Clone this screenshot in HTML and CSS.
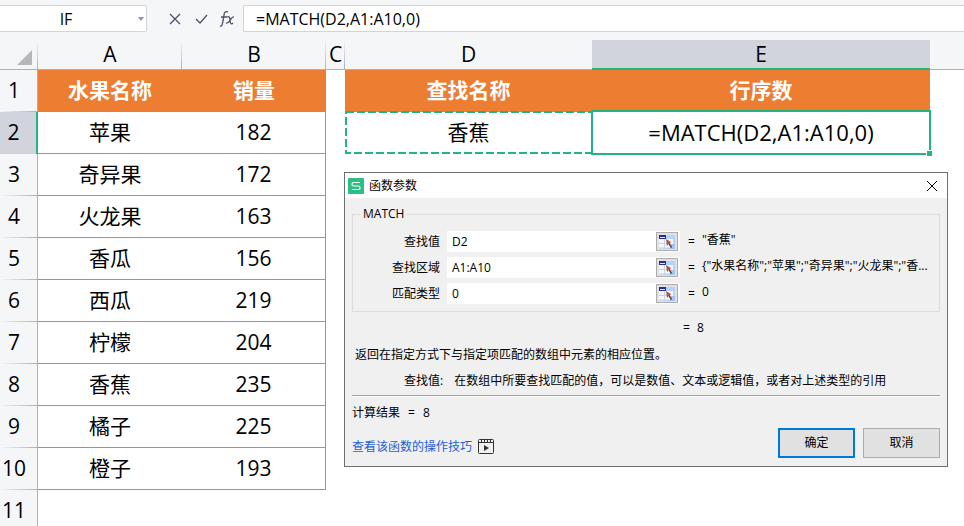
FILE: index.html
```html
<!DOCTYPE html>
<html lang="zh-CN">
<head>
<meta charset="utf-8">
<title>函数参数</title>
<link rel="stylesheet" href="styles.css">
</head>
<body>
<svg class="defs" aria-hidden="true">
  <symbol id="pick" viewBox="0 0 16 14">
    <rect x="4" y="0" width="12" height="14" fill="#b4d4fb"/>
    <path d="M0 4h14v9H0z" fill="#f3f8ff"/>
    <path d="M12 9h4v5h-6z" fill="#a3c4f6"/>
    <path d="M0 8.500h11M5.500 4v9M0 13h10" stroke="#c2d3ec" fill="none"/>
    <rect x="0" y="0" width="7" height="4" fill="#2b2f86"/>
    <rect x="1" y="2" width="5" height="1" fill="#dfe4f2"/>
    <path d="M7 4l5 3-1 1 2 4-1 1-2-4-2 2z" fill="#b5533c"/>
    <path d="M10 8l3 4-1 1-2-3z" fill="#5a4a52"/>
  </symbol>
</svg>
<header class="bar">
  <div class="namebox">
    <input class="name" aria-label="名称框" value="IF">
    <button class="drop" aria-label="名称列表"><svg viewBox="0 0 6 4"><path d="M0 0h6L3 4z"/></svg></button>
  </div>
  <div class="tools">
    <button aria-label="取消输入"><svg width="16" height="16" viewBox="0 0 16 16"><path d="M3 3l10 10M13 3L3 13"/></svg></button>
    <button aria-label="输入"><svg width="16" height="16" viewBox="0 0 16 16"><path d="M3 8l4 4 7-8"/></svg></button>
    <button aria-label="插入函数"><svg width="16" height="16" viewBox="0 0 16 16"><path d="M1 15c2 1 2-1 3-5l1-6c0-3 2-4 4-3M2 6h6M8 6c2-1 3 0 3 3s1 5 3 3M15 6c-3-1-4 7-8 6"/></svg></button>
  </div>
  <input class="formula" aria-label="编辑栏" value="=MATCH(D2,A1:A10,0)">
</header>
<main>
<table class="sheet">
  <colgroup><col class="c-row"><col class="c-a"><col class="c-a"><col class="c-c"><col class="c-d"><col class="c-e"><col></colgroup>
  <thead>
    <tr><th class="corner"><svg width="15" height="15" viewBox="0 0 15 15"><path d="M15 0v15H0z" fill="#b7b7b7"/></svg></th><th>A</th><th>B</th><th>C</th><th class="plain">D</th><th class="on">E</th><th class="plain"></th></tr>
  </thead>
  <tbody>
    <tr><th>1</th><td class="head">水果名称</td><td class="head">销量</td><td></td><td class="head">查找名称</td><td class="head">行序数</td><td></td></tr>
    <tr><th class="on">2</th><td class="line">苹果</td><td class="line end">182</td><td></td><td class="source">香蕉<svg class="ants"><rect x="1" y="1"/></svg></td><td class="active">=MATCH(D2,A1:A10,0)<i class="handle"></i></td><td></td></tr>
    <tr><th>3</th><td class="line">奇异果</td><td class="line end">172</td><td></td><td></td><td></td><td></td></tr>
    <tr><th>4</th><td class="line">火龙果</td><td class="line end">163</td><td></td><td></td><td></td><td></td></tr>
    <tr><th>5</th><td class="line">香瓜</td><td class="line end">156</td><td></td><td></td><td></td><td></td></tr>
    <tr><th>6</th><td class="line">西瓜</td><td class="line end">219</td><td></td><td></td><td></td><td></td></tr>
    <tr><th>7</th><td class="line">柠檬</td><td class="line end">204</td><td></td><td></td><td></td><td></td></tr>
    <tr><th>8</th><td class="line">香蕉</td><td class="line end">235</td><td></td><td></td><td></td><td></td></tr>
    <tr><th>9</th><td class="line">橘子</td><td class="line end">225</td><td></td><td></td><td></td><td></td></tr>
    <tr><th>10</th><td class="line">橙子</td><td class="line end">193</td><td></td><td></td><td></td><td></td></tr>
    <tr><th>11</th><td></td><td></td><td></td><td></td><td></td><td></td></tr>
  </tbody>
</table>
</main>
<section class="dialog" role="dialog" aria-label="函数参数">
  <div class="title">
    <svg width="16" height="16" viewBox="0 0 16 16"><rect width="16" height="16" rx="1" fill="#2abf83"/><path d="M12 4.500H5.500Q4 4.500 4 6.200t1.500 1.800h5Q12 8 12 9.800t-1.500 1.700H4" fill="none" stroke="#fff" stroke-width="1.200"/></svg>
    <span>函数参数</span>
    <button class="close" aria-label="关闭"><svg width="12" height="12" viewBox="0 0 12 12"><path d="M1 1l10 10M11 1L1 11" stroke="#000"/></svg></button>
  </div>
  <div class="content">
    <fieldset>
      <legend>MATCH</legend>
      <div class="arg"><label for="a1">查找值</label><div class="field"><input id="a1" value="D2"><button aria-label="选择区域"><svg width="16" height="14"><use href="#pick"/></svg></button></div><span class="eq">=</span><output>"香蕉"</output></div>
      <div class="arg"><label for="a2">查找区域</label><div class="field"><input id="a2" value="A1:A10"><button aria-label="选择区域"><svg width="16" height="14"><use href="#pick"/></svg></button></div><span class="eq">=</span><output>{"水果名称";"苹果";"奇异果";"火龙果";"香...</output></div>
      <div class="arg"><label for="a3">匹配类型</label><div class="field"><input id="a3" value="0"><button aria-label="选择区域"><svg width="16" height="14"><use href="#pick"/></svg></button></div><span class="eq">=</span><output>0</output></div>
    </fieldset>
    <div class="result"><span>=</span><output>8</output></div>
    <p class="about">返回在指定方式下与指定项匹配的数组中元素的相应位置。</p>
    <p class="help"><span>查找值:</span><span>在数组中所要查找匹配的值，可以是数值、文本或逻辑值，或者对上述类型的引用</span></p>
    <div class="total"><span>计算结果</span><span>=</span><output>8</output></div>
    <div class="foot">
      <a href="#tips">查看该函数的操作技巧<svg width="16" height="15" viewBox="0 0 16 15"><rect x=".5" y=".5" width="15" height="14" rx="1" fill="none" stroke="#333"/><path d="M1 3.500h14M3.500 1v2M6.500 1v2M9.500 1v2M12.500 1v2" fill="none" stroke="#333"/><path d="M6 6l5 3-5 3z" fill="#333"/></svg></a>
      <button class="ok">确定</button><button>取消</button>
    </div>
  </div>
</section>
</body>
</html>
```
FILE: styles.css
```css
* { box-sizing: border-box; }
body {
  margin: 0;
  height: 100vh;
  overflow: hidden;
  position: relative;
  background: #fff;
  color: #000;
  font-family: "Open Sans", "Noto Sans CJK SC", sans-serif;
  font-size: 12px;
}
input, button { font: inherit; color: inherit; margin: 0; padding: 0; border: 0; background: none; outline: 0; }
svg { display: block; }
.defs { position: absolute; width: 0; height: 0; }

.bar { height: 40px; padding: 5px 0 8px; display: flex; background: #f5f6f8; }
.namebox { width: 147px; display: flex; align-items: center; background: #fff; border: 1px solid #d3d4d8; border-left: 0; border-radius: 0 2px 2px 0; }
.name { width: 132px; text-align: center; font-size: 16px; }
.drop { width: 14px; height: 24px; padding-left: 6px; }
.drop svg { width: 6px; height: 4px; fill: #8b93b5; }
.tools { width: 96px; display: flex; align-items: center; padding-left: 20px; gap: 10px; }
.tools svg { fill: none; stroke: #4a5268; stroke-width: 1.3; }
.formula { flex: 1; min-width: 0; background: #fff; border: 1px solid #d3d4d8; border-right: 0; border-radius: 2px 0 0 2px; padding-left: 12px; font-size: 16px; }

.sheet { width: 100%; table-layout: fixed; border-collapse: separate; border-spacing: 0; font-size: 21px; line-height: 24px; }
.c-row { width: 38px; }
.c-a { width: 144px; }
.c-c { width: 19px; }
.c-d { width: 247px; }
.c-e { width: 338px; }
.sheet th, .sheet td { padding: 0 0 2px; height: 42px; text-align: center; position: relative; white-space: nowrap; }
.sheet th { font-weight: 400; background: #f5f6f8; }
.sheet thead th { height: 30px; border-bottom: 1px solid #a9afc4; background: linear-gradient(#f5f6f8, #a9afc4) right / 1px 100% no-repeat #f5f6f8; }
.sheet thead th.plain { background: #f5f6f8; }
.sheet thead th.on { padding-bottom: 0; background: #d1d4dd; border-bottom: 2px solid #22b57f; }
.sheet .corner svg { margin: 8px 6px 0 auto; }
.sheet tbody th { padding-right: 9px; border-right: 1px solid #a9afc4; background: linear-gradient(90deg, #f5f6f8, #a9afc4) bottom / 100% 1px no-repeat #f5f6f8; }
.sheet tbody th.on { background: #d1d4dd; border-right: 2px solid #22b57f; }
.sheet td.head { background: #ed7d31; color: #fff; font-weight: 700; }
.sheet td.line { border-bottom: 1px solid #ed7d31; }
.sheet td.end { border-right: 1px solid #ed7d31; }
.ants { position: absolute; left: 0; top: -1px; width: 100%; height: calc(100% + 1px); }
.ants rect { width: calc(100% - 1px); height: calc(100% - 2px); fill: none; stroke: #22b57f; stroke-width: 2; stroke-dasharray: 8 3; }
.sheet .active { font-size: 22px; }
.active::after { content: ""; position: absolute; inset: -2px -1px -1px -1px; border: 2px solid #22b57f; }
.handle { position: absolute; z-index: 1; right: -2px; bottom: -2px; width: 6px; height: 6px; background: #22b57f; border: solid #fff; border-width: 1px 0 0 1px; }

.dialog { position: absolute; left: 344px; top: 172px; width: 604px; border: 1px solid #6e6e6e; background: #f0f0f0; line-height: 18px; }
.title { height: 25px; padding: 0 9px 0 3px; display: flex; align-items: center; gap: 5px; background: #fff; }
.close { margin-left: auto; }
.content { padding: 7px 7px 8px; }
fieldset { margin: 0; padding: 8px 8px 7px; border: 1px solid #dcdcdc; min-width: 0; }
legend { padding: 0 2px; line-height: 18px; }
.arg { display: flex; align-items: center; height: 21px; margin-bottom: 5px; }
.arg:last-child { margin-bottom: 0; }
.arg label { width: 79px; text-align: right; }
.field { width: 233px; height: 21px; margin-left: 7px; display: flex; align-items: center; background: #fff; }
.field input { flex: 1; min-width: 0; padding-left: 5px; }
.field button { width: 22px; height: 19px; margin-right: 2px; display: grid; place-items: center; background: #e1e1e1; border: 1px solid #adadad; }
.eq { margin-left: 8px; width: 14px; }
.arg output { flex: 1; height: 21px; white-space: nowrap; }
.result { display: flex; gap: 7px; margin: 7px 0 0 331px; }
p { margin: 0; }
.about { margin: 9px 0 0 3px; }
.help { display: flex; gap: 11px; padding: 8px 0 5px 52px; border-bottom: 1px solid #a0a0a0; box-shadow: 0 1px #fff; }
.total { display: flex; gap: 8px; margin-top: 8px; }
.foot { display: flex; align-items: center; gap: 8px; margin-top: 6px; }
.foot a { margin-right: auto; padding-top: 7px; display: flex; align-items: center; gap: 6px; color: #1d5fd6; text-decoration: none; }
.foot button { width: 77px; height: 30px; background: #e1e1e1; border: 1px solid #adadad; }
.foot .ok { border: 2px solid #0078d7; }
```
